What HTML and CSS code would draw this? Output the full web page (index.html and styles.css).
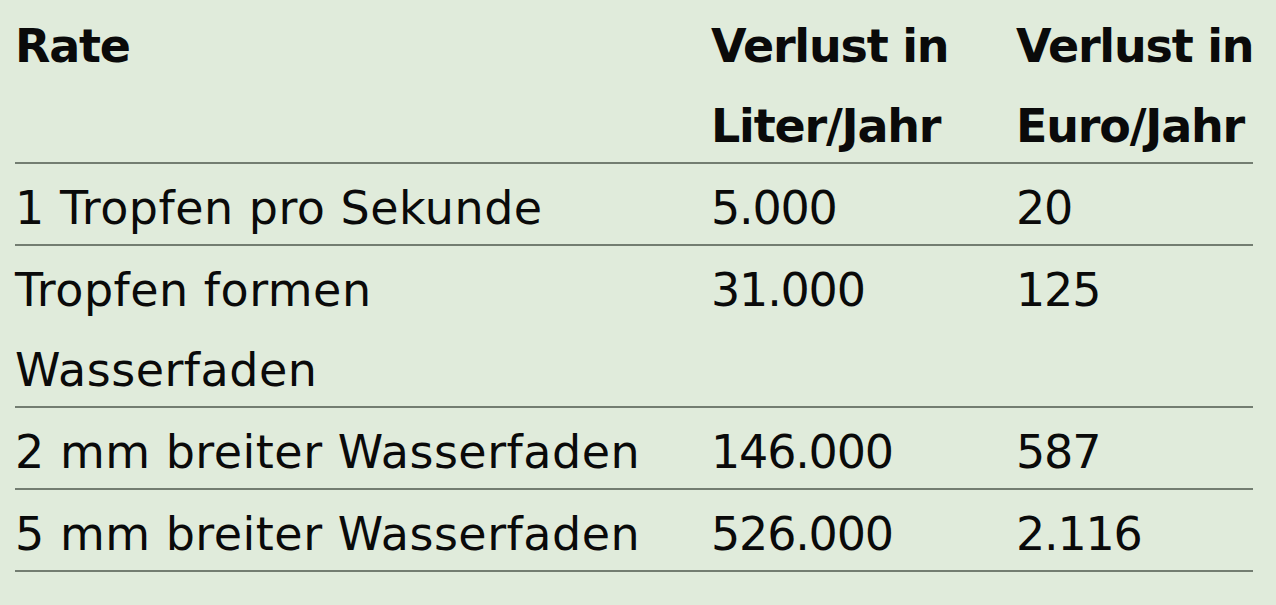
FILE: index.html
```html
<!DOCTYPE html>
<html lang="de">
<head>
<meta charset="utf-8">
<title>Wasserverlust</title>
<link rel="stylesheet" href="styles.css">
</head>
<body>
<table class="loss-table">
  <colgroup>
    <col class="col-rate">
    <col class="col-liter">
    <col class="col-euro">
  </colgroup>
  <thead>
    <tr>
      <th><span class="txt">Rate</span></th>
      <th><span class="txt">Verlust in<br>Liter/Jahr</span></th>
      <th><span class="txt">Verlust in<br>Euro/Jahr</span></th>
    </tr>
  </thead>
  <tbody>
    <tr>
      <td><span class="txt">1 Tropfen pro Sekunde</span></td>
      <td class="num"><span class="txt">5.000</span></td>
      <td class="num"><span class="txt">20</span></td>
    </tr>
    <tr>
      <td><span class="txt">Tropfen formen<br>Wasserfaden</span></td>
      <td class="num"><span class="txt">31.000</span></td>
      <td class="num"><span class="txt">125</span></td>
    </tr>
    <tr>
      <td><span class="txt">2 mm breiter Wasserfaden</span></td>
      <td class="num"><span class="txt">146.000</span></td>
      <td class="num"><span class="txt">587</span></td>
    </tr>
    <tr>
      <td><span class="txt">5 mm breiter Wasserfaden</span></td>
      <td class="num"><span class="txt">526.000</span></td>
      <td class="num"><span class="txt">2.116</span></td>
    </tr>
  </tbody>
</table>
</body>
</html>
```
FILE: styles.css
```css
html, body {
  margin: 0;
  padding: 0;
  background: #e0ebdb;
}

body {
  padding: 2px 0 0 15px;
  font-family: "DejaVu Sans", "Noto Sans", sans-serif;
  color: #0a0a0a;
}

.loss-table {
  width: 1238px;
  table-layout: fixed;
  border-collapse: collapse;
  border-spacing: 0;
}

.col-rate { width: 696px; }
.col-liter { width: 305px; }
.col-euro { width: 237px; }

.loss-table th,
.loss-table td {
  padding: 0;
  text-align: left;
  vertical-align: top;
  font-size: 46px;
  line-height: 80px;
  white-space: nowrap;
  border-bottom: 2px solid #737d71;
}

.loss-table th {
  font-weight: bold;
  letter-spacing: -1.2px;
}

.loss-table td {
  font-weight: normal;
  letter-spacing: 0.5px;
}

.loss-table td.num {
  letter-spacing: -1.2px;
}

.txt {
  line-height: 50px;
  vertical-align: -4px;
}
```
